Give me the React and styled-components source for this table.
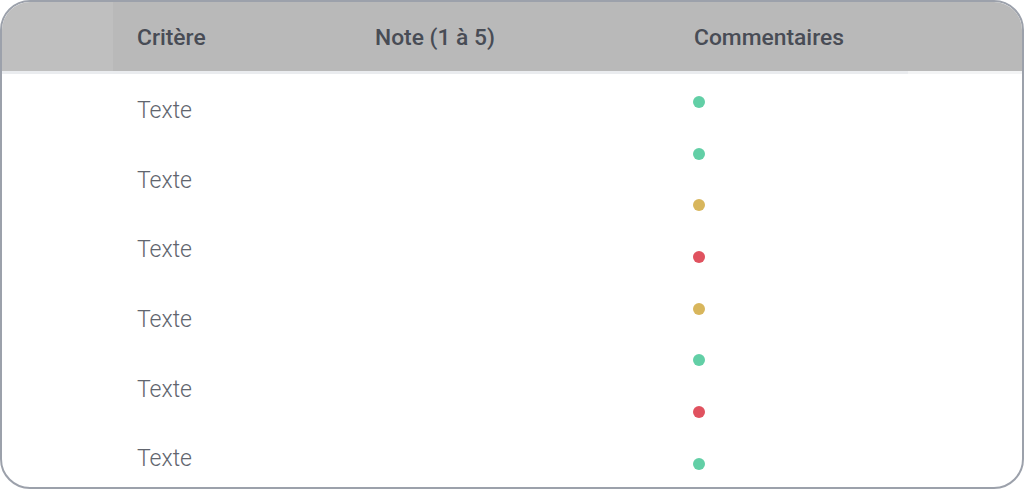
import React from "react";
import styled, { createGlobalStyle } from "styled-components";

const GlobalStyle = createGlobalStyle`
  html, body {
    margin: 0;
    padding: 0;
    background: #ffffff;
  }
  * {
    box-sizing: border-box;
  }
`;

const Card = styled.div`
  width: 1024px;
  height: 489px;
  border: 2px solid #9ca1ab;
  border-radius: 30px;
  overflow: hidden;
  background: #ffffff;
  font-family: Roboto, "Liberation Sans", sans-serif;
  display: flex;
  flex-direction: column;
`;

const Header = styled.div`
  display: grid;
  grid-template-columns: 111px 238px 319px 238px 1fr;
  height: 72px;
  flex-shrink: 0;
`;

const HeadCell = styled.div`
  display: flex;
  align-items: center;
  padding-left: ${(p) => (p.$spacer ? 0 : 24)}px;
  padding-top: 1px;
  background: ${(p) => (p.$light ? "#bfbfbf" : "#b9b9b9")};
  border-bottom: 3px solid ${(p) => (p.$noLine ? "#f3f4f5" : "#eaecef")};
  color: #484c55;
  font-size: 22.8px;
  font-weight: 500;
  white-space: nowrap;
`;

const Body = styled.div`
  display: grid;
  grid-template-columns: 111px 238px 319px 1fr;
  padding-top: 2px;
  flex: 1;
  min-height: 0;
`;

const Column = styled.div`
  grid-column: ${(p) => p.$col};
  display: flex;
  flex-direction: column;
`;

const TextRow = styled.div`
  height: 69.6px;
  flex-shrink: 0;
  display: flex;
  align-items: center;
  padding-left: 24px;
  color: #61656e;
  font-size: 23px;
  font-weight: 300;
`;

const DotRow = styled.div`
  height: 51.7px;
  flex-shrink: 0;
  display: flex;
  align-items: center;
  padding-left: 23px;
`;

const Dot = styled.span`
  width: 12px;
  height: 12px;
  border-radius: 50%;
  background: ${(p) => p.$color};
`;

const colors = {
  green: "#62cfa6",
  yellow: "#d8b65c",
  red: "#e0525f",
};

const dots = ["green", "green", "yellow", "red", "yellow", "green", "red", "green"];

export default function App() {
  return (
    <>
      <GlobalStyle />
      <Card>
        <Header>
          <HeadCell $spacer $light />
          <HeadCell>Critère</HeadCell>
          <HeadCell>Note (1 à 5)</HeadCell>
          <HeadCell>Commentaires</HeadCell>
          <HeadCell $spacer $noLine />
        </Header>
        <Body>
          <Column $col={2}>
            {Array.from({ length: 6 }).map((_, i) => (
              <TextRow key={i}>Texte</TextRow>
            ))}
          </Column>
          <Column $col={4}>
            {dots.map((c, i) => (
              <DotRow key={i}>
                <Dot $color={colors[c]} />
              </DotRow>
            ))}
          </Column>
        </Body>
      </Card>
    </>
  );
}
